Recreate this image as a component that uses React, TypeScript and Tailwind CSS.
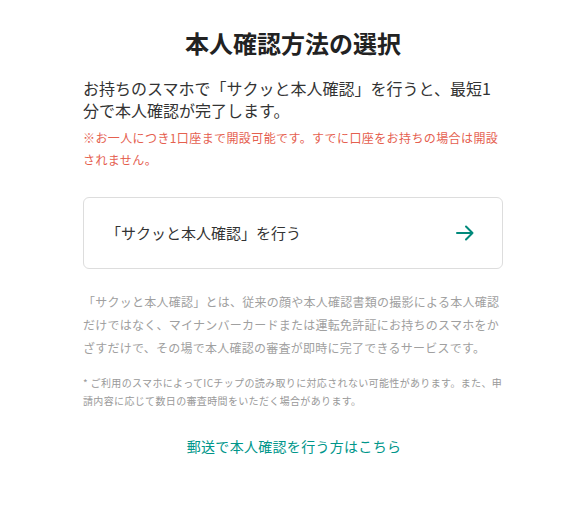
import React from "react";

export default function App() {
  return (
    <div
      className="min-h-[516px] w-[564px] bg-white"
      style={{ fontFamily: '"Noto Sans CJK JP", "Noto Sans", sans-serif' }}
    >
      <div className="ml-[83px] w-[420px] pt-[27px]">
        <h1 className="text-center text-[24px] font-bold leading-[32px] text-[#222222]">
          本人確認方法の選択
        </h1>
        <p className="mt-[18px] text-[16px] leading-[22px] text-[#333333]">
          お持ちのスマホで「サクッと本人確認」を行うと、最短1分で本人確認が完了します。
        </p>
        <p className="mt-[6px] text-[12px] leading-[22px] tracking-[0.4px] text-[#e5604f]">
          ※お一人につき1口座まで開設可能です。すでに口座をお持ちの場合は開設されません。
        </p>
        <button className="mt-[26px] flex h-[72px] w-full items-center justify-between rounded-[6px] border border-[#dddddd] bg-white pl-[22px] pr-[28px] text-left">
          <span className="text-[15px] text-[#333333]">「サクッと本人確認」を行う</span>
          <svg width="18" height="16" viewBox="0 0 18 16" fill="none">
            <path
              d="M1 8H16.5M10 1.5L16.5 8L10 14.5"
              stroke="#00897b"
              strokeWidth="2"
              strokeLinecap="round"
              strokeLinejoin="round"
            />
          </svg>
        </button>
        <p className="mt-[21px] text-[12px] leading-[23px] tracking-[0.25px] text-[#a0a0a0]">
          「サクッと本人確認」とは、従来の顔や本人確認書類の撮影による本人確認だけではなく、マイナンバーカードまたは運転免許証にお持ちのスマホをかざすだけで、その場で本人確認の審査が即時に完了できるサービスです。
        </p>
        <p className="mt-[15px] text-[10px] leading-[18px] tracking-[0.35px] text-[#999999]">
          * ご利用のスマホによってICチップの読み取りに対応されない可能性があります。また、申請内容に応じて数日の審査時間をいただく場合があります。
        </p>
        <p className="mt-[26px] pl-[2px] text-center text-[14px] leading-[20px] tracking-[0.3px] text-[#00968a]">
          郵送で本人確認を行う方はこちら
        </p>
      </div>
    </div>
  );
}
